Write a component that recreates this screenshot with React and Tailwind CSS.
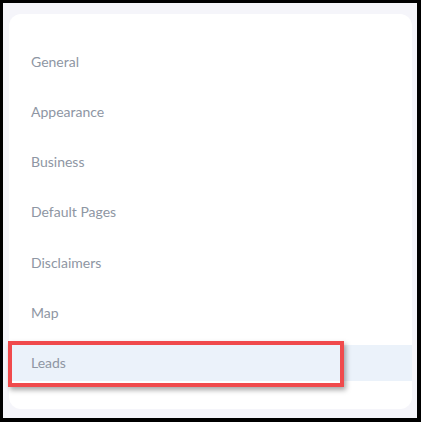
export default function App() {
  const items = ["General", "Appearance", "Business", "Default Pages", "Disclaimers", "Map", "Leads"];
  return (
    <div className="w-[421px] h-[422px] bg-black pt-[3px] pl-[3px] pr-[4px] pb-[4px]" style={{ fontFamily: "Lato, 'Noto Sans', sans-serif" }}>
      <div className="w-full h-full bg-[#f5f5fa] pt-[11px] pl-[6px] pr-[5px] pb-[9px]">
        <div className="relative w-full h-full bg-white rounded-[12px] pt-[29px]">
          <div className="flex flex-col gap-[14.33px]">
            {items.map((it) => (
              <div
                key={it}
                className={`h-9 flex items-center pl-[22px] text-[14px] text-[#8e96a3] ${it === "Leads" ? "bg-[#ebf2fa]" : ""}`}
              >
                {it}
              </div>
            ))}
          </div>
          <div className="absolute left-[-1px] top-[327px] w-[336px] h-[46px] border-[4px] border-[#f04a4c] shadow-[2px_3px_5px_rgba(0,0,0,0.35)]"></div>
        </div>
      </div>
    </div>
  );
}
